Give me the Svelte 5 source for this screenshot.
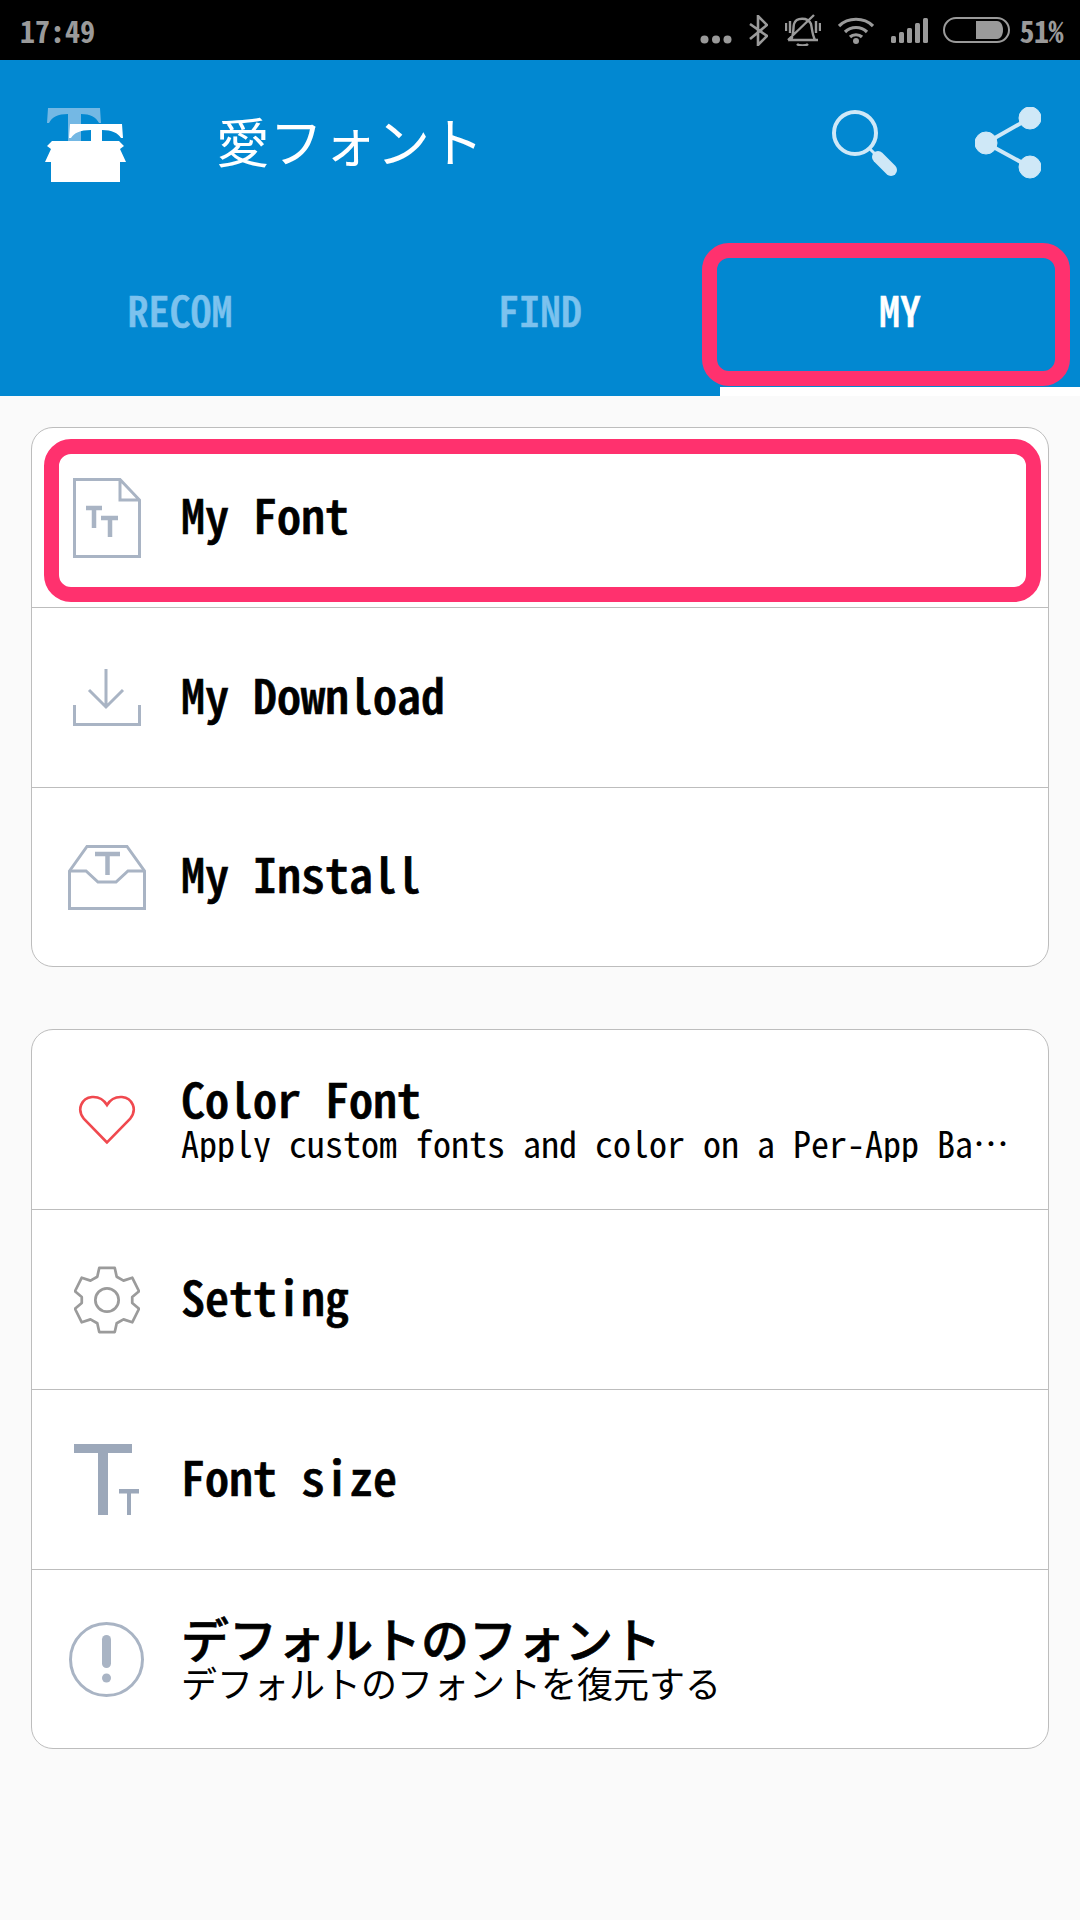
<script>
  const group1 = [
    { icon: 'file', title: 'My Font', frame: true },
    { icon: 'download', title: 'My Download' },
    { icon: 'inbox', title: 'My Install' }
  ];
  const group2 = [
    { icon: 'heart', title: 'Color Font', sub: 'Apply custom fonts and color on a Per-App Basis' },
    { icon: 'gear', title: 'Setting' },
    { icon: 'size', title: 'Font size' },
    { icon: 'alert', title: 'デフォルトのフォント', sub: 'デフォルトのフォントを復元する' }
  ];
</script>

{#snippet rowIcon(name)}
  {#if name === 'file'}
    <svg width="68" height="80" viewBox="0 0 68 80" fill="none" stroke="#a9b4c4" stroke-width="3">
      <path d="M1.5 1.5H47L66.5 22V78.5H1.5Z M47 1.5V22H66.5" />
      <path d="M13 30H29 M21 30V50 M28 40H45 M37 40V59" stroke-width="4.5" />
    </svg>
  {:else if name === 'download'}
    <svg width="68" height="57" viewBox="0 0 68 57" fill="none" stroke="#a9b4c4" stroke-width="3">
      <path d="M1.5 36V55.5H66.5V36" />
      <path d="M33 0V38 M16 21L33 38L50 21" />
    </svg>
  {:else if name === 'inbox'}
    <svg width="78" height="65" viewBox="0 0 78 65" fill="none" stroke="#a9b4c4" stroke-width="3">
      <path d="M1.5 26L19 1.5H59L76.5 26V63.5H1.5Z" />
      <path d="M1.5 26H18L30 37H48L60 26H76.5" />
      <path d="M27 9H52 M39.5 9V30" stroke-width="4.5" />
    </svg>
  {:else if name === 'heart'}
    <svg width="58" height="50" viewBox="0 0 58 50" fill="none" stroke="#f0494f" stroke-width="2.6">
      <path d="M29 47.5L6 24C-2 14 4 3 14 2C21 1.500 26 5 29 10C32 5 37 1.500 44 2C54 3 60 14 52 24Z" />
    </svg>
  {:else if name === 'gear'}
    <svg width="66" height="68" viewBox="0 0 68 70" fill="none" stroke="#9b9b9b" stroke-width="2.8" stroke-linejoin="round">
      <circle cx="34" cy="35" r="12" />
      <path d="M26 2H42L44 11L51 15L60 12L67 26L60 32V38L67 44L60 58L51 55L44 59L42 68H26L24 59L17 55L8 58L1 44L8 38V32L1 26L8 12L17 15L24 11Z" />
    </svg>
  {:else if name === 'size'}
    <svg width="65" height="71" viewBox="0 0 65 71" fill="#9ca8ba">
      <path d="M0 0H58V9H34V71H24V9H0Z" />
      <path d="M45 45H65V49.500H57V71H53V49.500H45Z" />
    </svg>
  {:else if name === 'alert'}
    <svg width="75" height="75" viewBox="0 0 75 75">
      <circle cx="37.500" cy="37.500" r="36" fill="none" stroke="#a9b4c4" stroke-width="3" />
      <rect x="33" y="13" width="9" height="33" rx="4.500" fill="#a9b4c4" />
      <circle cx="37.500" cy="56" r="4.500" fill="#a9b4c4" />
    </svg>
  {/if}
{/snippet}

{#snippet card(rows)}
  <div class="card">
    {#each rows as r}
      <div class="row">
        <div class="icon">{@render rowIcon(r.icon)}</div>
        <div class="texts" class:two={r.sub}>
          <div class="title">{r.title}</div>
          {#if r.sub}<div class="sub">{r.sub}</div>{/if}
        </div>
        {#if r.frame}<div class="frame rowframe"></div>{/if}
      </div>
    {/each}
  </div>
{/snippet}

<div class="page">
  <div class="status">
    <span class="time">17:49</span>
    <div class="sicons">
      <svg class="dots" width="32" height="9" viewBox="0 0 32 9" fill="#9a9a9a"><circle cx="4.500" cy="4.500" r="4"/><circle cx="16" cy="4.500" r="4"/><circle cx="27.500" cy="4.500" r="4"/></svg>
      <svg width="19" height="31" viewBox="0 0 19 31" fill="none" stroke="#9a9a9a" stroke-width="2.6"><path d="M1 9L18 21L9 30V1L18 10L1 24"/></svg>
      <svg width="36" height="32" viewBox="0 0 36 32" fill="none" stroke="#9a9a9a" stroke-width="2.4"><path d="M3 26H33 M6 26C9 20 8 14 9 10C11 3 23 3 26 10C27 14 27 20 30 26 M12 30C14 32 21 32 23 30 M1 9V17 M5 7V19 M31 7V19 M35 9V17 M3 26L29 1"/></svg>
      <svg width="36" height="27" viewBox="0 0 36 27" fill="none" stroke="#9a9a9a" stroke-width="3.2"><path d="M1 9C10 0 26 0 35 9 M7 15C13 9 23 9 29 15 M12 20C15 17 21 17 24 20"/><circle cx="18" cy="24" r="3" fill="#9a9a9a" stroke="none"/></svg>
      <svg width="37" height="25" viewBox="0 0 37 25" fill="#9a9a9a"><rect x="0" y="18" width="5" height="7" rx="1.500"/><rect x="8" y="14" width="5" height="11" rx="1.500"/><rect x="16" y="10" width="5" height="15" rx="1.500"/><rect x="24" y="5" width="5" height="20" rx="1.500"/><rect x="32" y="0" width="5" height="25" rx="1.500"/></svg>
      <svg class="batt" width="67" height="26" viewBox="0 0 67 26"><rect x="1" y="1" width="65" height="24" rx="12" fill="none" stroke="#9a9a9a" stroke-width="2"/><path d="M33 4H54C62 4 62 22 54 22H33Z" fill="#9a9a9a"/></svg>
      <span class="pct">51%</span>
    </div>
  </div>

  <div class="appbar">
    <div class="top">
      <svg class="logo" width="81" height="75" viewBox="0 0 81 75">
        <path d="M3 0H55L56 15H54C51 9 45 6 36 6V35H23V6C13 6 7 9 4 15H2Z" fill="#74b8e4" />
        <path d="M25 16H77L78 30H76C73 25 67 22 57 22V35H46V22C35 22 29 25 26 30H24Z" fill="#ffffff" />
        <path d="M7 33H74L79 38L75 41L81 54H75V74H6V54H0L6 41L2 38Z" fill="#ffffff" />
      </svg>
      <div class="apptitle">愛フォント</div>
      <div class="actions">
        <svg width="66" height="68" viewBox="0 0 66 68" fill="none" stroke="#cfe8f7">
          <circle cx="23" cy="24" r="21" stroke-width="4" />
          <path d="M38 40L43 45" stroke-width="3" />
          <path d="M46 48L59 61" stroke-width="12" stroke-linecap="round" />
        </svg>
        <svg width="66" height="72" viewBox="0 0 66 72" fill="#cfe8f7" stroke="#cfe8f7">
          <path d="M55 11L11 36L55 60" fill="none" stroke-width="4" />
          <circle cx="55" cy="11" r="11" /><circle cx="11" cy="36" r="11" /><circle cx="55" cy="60" r="11" />
        </svg>
      </div>
    </div>
    <div class="tabs">
      <div class="tab">RECOM</div>
      <div class="tab">FIND</div>
      <div class="tab on">MY</div>
      <div class="frame tabframe"></div>
    </div>
  </div>

  <div class="content">
    {@render card(group1)}
    {@render card(group2)}
  </div>
</div>

<style>
  :global(body) { margin: 0; background: #fafafa; }
  .page {
    width: 1080px; height: 1920px; overflow: hidden; background: #fafafa;
    font-family: "Noto Sans CJK JP", sans-serif;
    font-feature-settings: "hwid";
    display: flex; flex-direction: column;
  }
  .status {
    height: 60px; background: #000; color: #9a9a9a; flex: none;
    display: flex; align-items: center; justify-content: space-between;
    padding: 0 17px 0 20px; box-sizing: border-box;
  }
  .time, .pct { font-size: 30px; font-weight: 700; line-height: 1; }
  .pct { letter-spacing: -0.5px; }
  .sicons { display: flex; align-items: center; gap: 17px; }
  .dots { margin-top: 19px; }
  .batt { margin-left: -2px; margin-right: -7px; }
  .appbar { height: 336px; background: #0288d1; flex: none; display: flex; flex-direction: column; }
  .top { height: 170px; display: flex; align-items: center; padding: 0 39px 0 45px; flex: none; }
  .apptitle {
    margin-left: 90px; margin-bottom: 10px; font-size: 53.5px; color: #fff; line-height: 1; font-feature-settings: normal;
  }
  .actions { margin-left: auto; margin-bottom: 4px; display: flex; align-items: center; gap: 77px; }
  .tabs { position: relative; display: flex; flex: 1; }
  .tab {
    flex: 1; display: flex; align-items: center; justify-content: center; padding-bottom: 10px; box-sizing: border-box;
    font-size: 42px; font-weight: 500; -webkit-text-stroke: 0.6px currentColor; color: #7cc2ee;
  }
  .tab.on { color: #fff; box-shadow: inset 0 -9px 0 #fff; }
  .frame { position: absolute; box-sizing: border-box; border: 15px solid #ff316e; border-radius: 27px; }
  .tabframe { left: 702px; top: 13px; width: 368px; height: 143px; }
  .content { padding: 31px 31px 0; display: flex; flex-direction: column; gap: 62px; }
  .card { background: #fff; border: 1px solid #bdbdbd; border-radius: 22px; overflow: hidden; }
  .row {
    position: relative; height: 179px; display: flex; align-items: center;
    border-bottom: 1px solid #bdbdbd;
  }
  .row:last-child { border-bottom: none; height: 178px; }
  .icon { width: 149px; flex: none; display: flex; align-items: center; justify-content: center; }
  .texts { min-width: 0; flex: 1; padding: 0 35px 10px 0; color: #000; }
  .texts.two { padding-bottom: 5px; }
  .title { font-size: 48px; font-weight: 500; -webkit-text-stroke: 0.7px #000; line-height: 50px; }
  .sub { font-size: 36px; line-height: 40px; white-space: nowrap; overflow: hidden; text-overflow: ellipsis; }
  .rowframe { left: 12px; top: 11px; width: 997px; height: 163px; }
</style>
